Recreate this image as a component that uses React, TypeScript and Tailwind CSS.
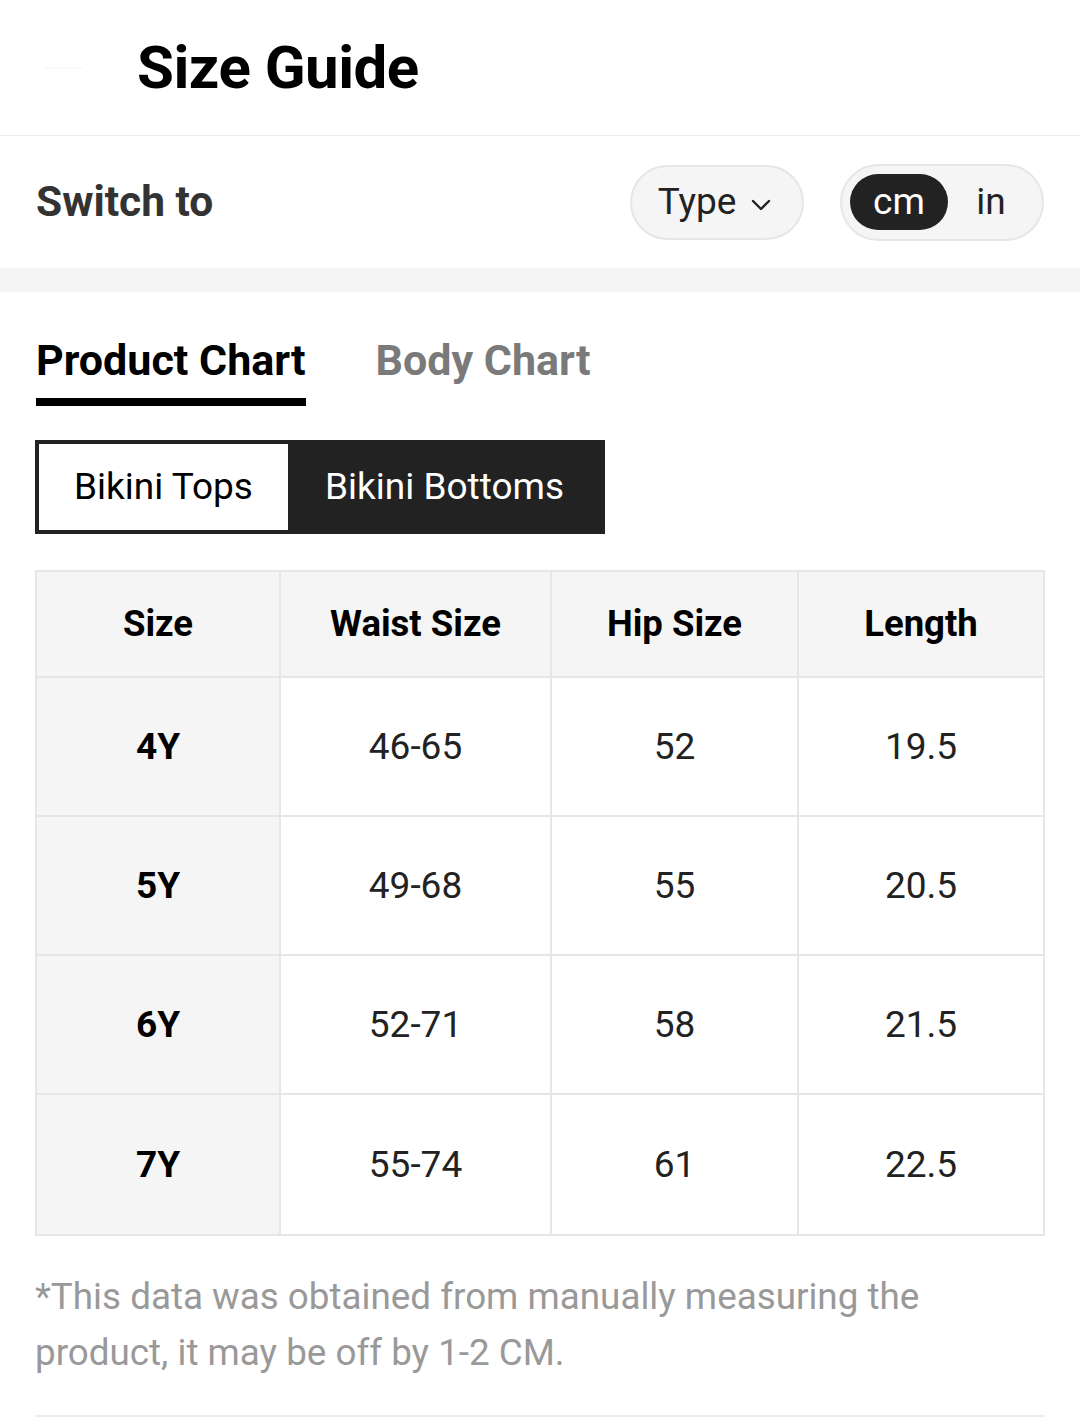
import React from "react";

const rows = [
  ["4Y", "46-65", "52", "19.5"],
  ["5Y", "49-68", "55", "20.5"],
  ["6Y", "52-71", "58", "21.5"],
  ["7Y", "55-74", "61", "22.5"],
];

export default function App() {
  return (
    <div className="w-[1080px] min-h-[1421px] bg-white font-['Roboto','Liberation_Sans',sans-serif] text-[#222]">
      {/* Header */}
      <div className="h-[136px] border-b border-[#ececec] flex items-center relative">
        <div className="w-[137px] h-full flex items-center pl-[40px]">
          <svg width="46" height="30" viewBox="0 0 46 30" className="opacity-10">
            <path d="M4 15 L42 15" stroke="#999" strokeWidth="1" />
          </svg>
        </div>
        <h1 className="text-[60px] font-bold text-black leading-none tracking-[-0.5px]">Size Guide</h1>
      </div>

      {/* Switch row */}
      <div className="h-[132px] flex items-center px-[36px]">
        <div className="text-[42.5px] font-bold text-[#333] flex-1">Switch to</div>
        <div className="h-[75px] w-[174px] rounded-full bg-[#f5f5f5] border-2 border-[#e6e6e6] flex items-center justify-center gap-[14px] mr-[36px] pr-[4px]">
          <span className="text-[37px] text-[#222]">Type</span>
          <svg width="22" height="14" viewBox="0 0 22 14" className="mt-[6px]">
            <path d="M3 3 L11 11 L19 3" fill="none" stroke="#222" strokeWidth="2.4" strokeLinecap="round" strokeLinejoin="round" />
          </svg>
        </div>
        <div className="h-[77px] w-[204px] rounded-full bg-[#f5f5f5] border-2 border-[#e6e6e6] flex items-center pl-[8px]">
          <div className="h-[56px] w-[98px] rounded-full bg-[#222] text-white text-[37px] flex items-center justify-center">cm</div>
          <div className="flex-1 text-[37px] text-[#222] text-center pr-[8px]">in</div>
        </div>
      </div>

      {/* Gray band */}
      <div className="h-[24px] bg-[#f5f5f5]" />

      {/* Tabs */}
      <div className="px-[36px] pt-[44px] flex gap-[70px]">
        <div className="flex flex-col">
          <span className="text-[43px] font-bold text-black leading-[48px]">Product Chart</span>
          <div className="mt-[14px] h-[8px] bg-black" />
        </div>
        <span className="text-[43px] font-bold text-[#7a7a7a] leading-[48px]">Body Chart</span>
      </div>

      {/* Segment */}
      <div className="px-[35px] mt-[34px]">
        <div className="inline-flex border-[4px] border-[#222] bg-[#222] h-[94px]">
          <div className="w-[249px] bg-white text-black text-[37px] flex items-center justify-center">Bikini Tops</div>
          <div className="w-[313px] text-white text-[37px] flex items-center justify-center">Bikini Bottoms</div>
        </div>
      </div>

      {/* Table */}
      <div className="px-[35px] mt-[36px]">
        <div className="w-[1010px] border-2 border-[#e6e6e6]">
          <div className="grid grid-cols-[244px_271px_247px_244px] h-[106px] bg-[#f5f5f5] border-b-2 border-[#e6e6e6]">
            {["Size", "Waist Size", "Hip Size", "Length"].map((h, i) => (
              <div
                key={h}
                className={`flex items-center justify-center text-[36.5px] font-bold text-black ${i < 3 ? "border-r-2 border-[#e6e6e6]" : ""}`}
              >
                {h}
              </div>
            ))}
          </div>
          {rows.map((r, ri) => (
            <div
              key={r[0]}
              className={`grid grid-cols-[244px_271px_247px_244px] h-[139px] ${ri < rows.length - 1 ? "border-b-2 border-[#e6e6e6]" : ""}`}
            >
              {r.map((c, i) => (
                <div
                  key={i}
                  className={`flex items-center justify-center text-[37px] ${i === 0 ? "bg-[#f5f5f5] font-bold text-black" : "text-[#222]"} ${i < 3 ? "border-r-2 border-[#e6e6e6]" : ""}`}
                >
                  {c}
                </div>
              ))}
            </div>
          ))}
        </div>
      </div>

      {/* Note */}
      <div className="px-[35px] pt-[33px] text-[36.8px] leading-[56px] text-[#999]">
        *This data was obtained from manually measuring the product, it may be off by 1-2 CM.
      </div>

      <div className="mx-[35px] mt-[34px] border-b-2 border-[#ececec]" />
    </div>
  );
}
